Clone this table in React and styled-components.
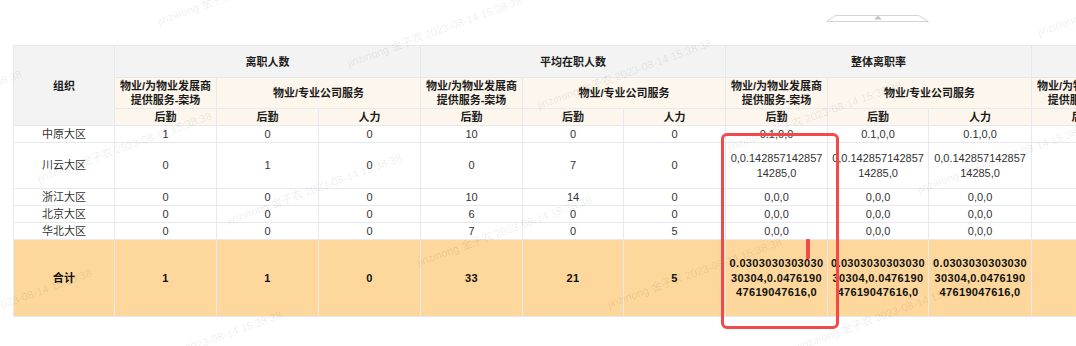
import React from "react";
import styled, { createGlobalStyle } from "styled-components";

const GlobalStyle = createGlobalStyle`
  html, body { margin: 0; padding: 0; background: #fff; }
  body { font-family: "Liberation Sans", "Noto Sans CJK SC", sans-serif; }
`;

const Page = styled.div`
  position: relative;
  width: 1076px;
  height: 346px;
  overflow: hidden;
  background: #fff;
`;

const TopBar = styled.div`
  height: 45px;
  box-sizing: border-box;
  display: flex;
  align-items: flex-start;
  padding: 14px 0 0 826px;
`;

const TableWrap = styled.div`
  padding-left: 13px;
`;

const Table = styled.table`
  border-collapse: collapse;
  table-layout: fixed;
  width: 1325px;
`;

const Col = styled.col`
  width: ${(p) => p.$w}px;
`;

const Row = styled.tr`
  height: ${(p) => p.$h}px;
`;

const BORDER = "#e7e9ef";

const Th = styled.th`
  border: 1px solid ${BORDER};
  background: ${(p) => (p.$tone === "gray" ? "#f3f3f3" : "#fdf6ec")};
  color: #1b1b1b;
  font-size: 11px;
  font-weight: 700;
  line-height: 14px;
  padding: 0 3px;
  text-align: center;
  vertical-align: middle;
  box-sizing: border-box;
`;

const Td = styled.td`
  border: 1px solid ${BORDER};
  background: ${(p) => (p.$total ? "#fdd79b" : "#fff")};
  color: ${(p) => (p.$total ? "#111" : "#333")};
  font-size: 11px;
  font-weight: ${(p) => (p.$total ? 700 : 400)};
  letter-spacing: ${(p) => (p.$total ? "0.35px" : "0")};
  line-height: ${(p) => (p.$total ? "14.5px" : "15px")};
  padding: 0 3px;
  text-align: center;
  vertical-align: middle;
  word-break: break-all;
  box-sizing: border-box;
`;

const Overlay = styled.div`
  position: absolute;
  inset: 0;
  pointer-events: none;
  z-index: 2;
`;

const Mark = styled.span`
  position: absolute;
  white-space: nowrap;
  font-family: "Liberation Sans", "Noto Sans CJK SC", sans-serif;
  font-size: 11px;
  line-height: 13px;
  color: rgba(0, 0, 0, 0.09);
  transform-origin: 0 100%;
  transform: rotate(-20deg);
`;

const Annotation = styled.div`
  position: absolute;
  left: 721px;
  top: 133px;
  width: 118px;
  height: 196px;
  box-sizing: border-box;
  border: 3px solid #f24a4a;
  border-radius: 6px;
`;

const Tick = styled.div`
  position: absolute;
  left: 806px;
  top: 239px;
  width: 4px;
  height: 20px;
  border-radius: 1px;
  background: #f24a4a;
`;

const Handle = () => (
  <svg width="104" height="9" viewBox="0 0 104 9">
    <polygon
      points="0.5,7.5 9.5,1.5 92.5,1.5 102.5,7.5"
      fill="#fff"
      stroke="#d4d4d4"
      strokeWidth="1"
    />
    <polygon points="48,5.5 52,1.5 56,5.5" fill="#c4c4c4" />
  </svg>
);

const WIDTHS = [101, 102, 102, 102, 102, 101, 102, 102, 101, 103, 102, 102, 102];
const GROUPS = ["离职人数", "平均在职人数", "整体离职率", "累计离职率"];
const SUB_A = "物业/为物业发展商提供服务-案场";
const SUB_B = "物业/专业公司服务";

const R = "0,0.14285714285714285,0";
const T = "0.030303030303030304,0.047619047619047616,0";

const ROWS = [
  { name: "中原大区", h: 17, vals: ["1", "0", "0", "10", "0", "0", "0.1,0,0", "0.1,0,0", "0.1,0,0"] },
  { name: "川云大区", h: 46, vals: ["0", "1", "0", "0", "7", "0", R, R, R] },
  { name: "浙江大区", h: 17, vals: ["0", "0", "0", "10", "14", "0", "0,0,0", "0,0,0", "0,0,0"] },
  { name: "北京大区", h: 17, vals: ["0", "0", "0", "6", "0", "0", "0,0,0", "0,0,0", "0,0,0"] },
  { name: "华北大区", h: 17, vals: ["0", "0", "0", "7", "0", "5", "0,0,0", "0,0,0", "0,0,0"] },
];
const TOTAL = ["1", "1", "0", "33", "21", "5", T, T, T];

const WM = "jinzinong 金子农 2023-08-14 15:38:38";
const marks = [];
for (let i = -3; i <= 6; i++) {
  for (let j = -2; j <= 3; j++) {
    const x = 40 + 190 * i + 120 * j;
    const y = 185 + 42 * i - 157 * j;
    if (x > -200 && x < 1076 && y > -5 && y < 420) marks.push({ x, y });
  }
}

export default function App() {
  return (
    <>
      <GlobalStyle />
      <Page>
        <TopBar>
          <Handle />
        </TopBar>
        <TableWrap>
          <Table>
            <colgroup>
              {WIDTHS.map((w, i) => (
                <Col key={i} $w={w} />
              ))}
            </colgroup>
            <thead>
              <Row $h={32}>
                <Th $tone="gray" rowSpan={3}>组织</Th>
                {GROUPS.map((g) => (
                  <Th key={g} $tone="gray" colSpan={3}>{g}</Th>
                ))}
              </Row>
              <Row $h={31}>
                {GROUPS.map((g) => (
                  <React.Fragment key={g}>
                    <Th>{SUB_A}</Th>
                    <Th colSpan={2}>{SUB_B}</Th>
                  </React.Fragment>
                ))}
              </Row>
              <Row $h={17}>
                {GROUPS.map((g) => (
                  <React.Fragment key={g}>
                    <Th>后勤</Th>
                    <Th>后勤</Th>
                    <Th>人力</Th>
                  </React.Fragment>
                ))}
              </Row>
            </thead>
            <tbody>
              {ROWS.map((r) => (
                <Row key={r.name} $h={r.h}>
                  <Td>{r.name}</Td>
                  {r.vals.map((v, i) => (
                    <Td key={i}>{v}</Td>
                  ))}
                  <Td />
                  <Td />
                  <Td />
                </Row>
              ))}
              <Row $h={77}>
                <Td $total>合计</Td>
                {TOTAL.map((v, i) => (
                  <Td key={i} $total>{v}</Td>
                ))}
                <Td $total />
                <Td $total />
                <Td $total />
              </Row>
            </tbody>
          </Table>
        </TableWrap>
        <Overlay>
          {marks.map((m, k) => (
            <Mark key={k} style={{ left: m.x, top: m.y - 13 }}>{WM}</Mark>
          ))}
          <Annotation />
          <Tick />
        </Overlay>
      </Page>
    </>
  );
}
